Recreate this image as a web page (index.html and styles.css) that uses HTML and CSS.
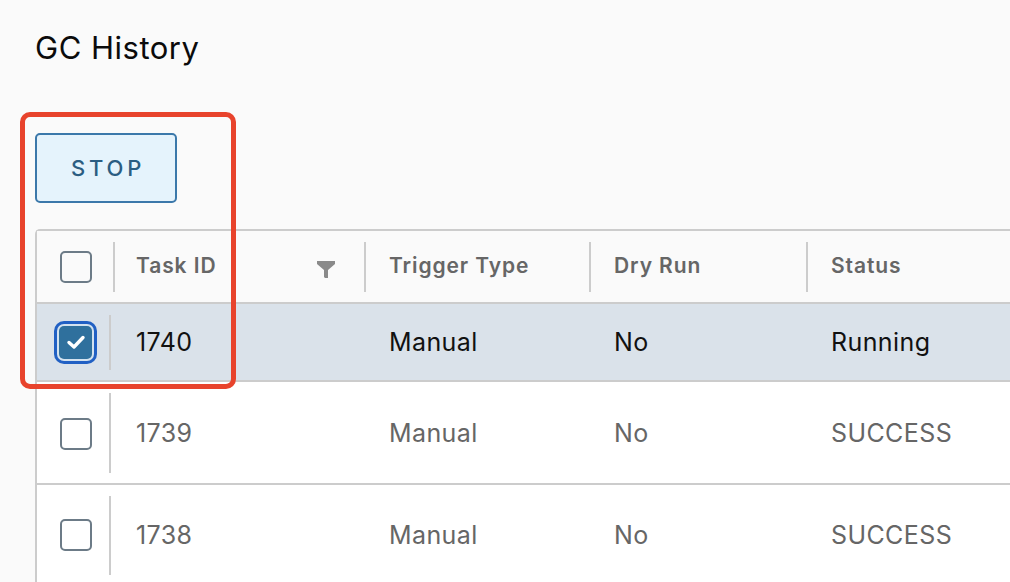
FILE: index.html
```html
<!DOCTYPE html>
<html>
<head>
<meta charset="utf-8">
<link rel="stylesheet" href="styles.css">
</head>
<body>
<div class="page">
  <h1 class="title">GC History</h1>
  <div class="toolbar">
    <button class="btn">STOP</button>
  </div>
  <div class="grid">
    <div class="row head">
      <div class="cell sel"><span class="cb"></span></div>
      <div class="cell c1"><span class="sep"></span><span class="txt">Task ID</span>
        <svg class="filter" width="18" height="17" viewBox="0 0 18 17"><path d="M0 0 H18 V3 L11 9 V17 H8 L7 16 V9 L0 3 Z" fill="#8a8a8a"/></svg>
      </div>
      <div class="cell c2"><span class="sep"></span><span class="txt">Trigger Type</span></div>
      <div class="cell c3"><span class="sep"></span><span class="txt">Dry Run</span></div>
      <div class="cell c4"><span class="sep"></span><span class="txt">Status</span></div>
    </div>
    <div class="row body selected r1">
      <div class="cell sel"><span class="cb checked"><svg width="20" height="16" viewBox="0 0 20 16"><path d="M3 8.5 L8 13 L17 3.5" fill="none" stroke="#fff" stroke-width="3.4" stroke-linecap="round" stroke-linejoin="round"/></svg></span><span class="sep"></span></div>
      <div class="cell c1"><span class="txt">1740</span></div>
      <div class="cell c2"><span class="txt">Manual</span></div>
      <div class="cell c3"><span class="txt">No</span></div>
      <div class="cell c4"><span class="txt">Running</span></div>
    </div>
    <div class="row body r2">
      <div class="cell sel"><span class="cb"></span><span class="sep"></span></div>
      <div class="cell c1"><span class="txt">1739</span></div>
      <div class="cell c2"><span class="txt">Manual</span></div>
      <div class="cell c3"><span class="txt">No</span></div>
      <div class="cell c4"><span class="txt">SUCCESS</span></div>
    </div>
    <div class="row body r3">
      <div class="cell sel"><span class="cb"></span><span class="sep"></span></div>
      <div class="cell c1"><span class="txt">1738</span></div>
      <div class="cell c2"><span class="txt">Manual</span></div>
      <div class="cell c3"><span class="txt">No</span></div>
      <div class="cell c4"><span class="txt">SUCCESS</span></div>
    </div>
  </div>
  <div class="highlight"></div>
</div>
</body>
</html>
```

FILE: styles.css
```css
* { box-sizing: border-box; }
html, body {
  margin: 0;
  padding: 0;
  background: #fafafa;
  overflow: hidden;
  width: 1010px;
  height: 582px;
}
body {
  font-family: "Inter", "Noto Sans", sans-serif;
  color: #1b1b1b;
}
.page {
  position: relative;
  padding: 0 0 0 35px;
  height: 582px;
  overflow: hidden;
}
.title {
  margin: 0;
  padding-top: 28px;
  font-size: 31px;
  font-weight: 400;
  line-height: 40px;
  color: #0b0b0b;
  letter-spacing: 0.5px;
}
.toolbar {
  padding-top: 65px;
  height: 161px;
}
.btn {
  width: 142px;
  height: 70px;
  background: #e5f3fc;
  border: 2px solid #3b78aa;
  border-radius: 5px;
  color: #2b5d82;
  font-family: "Inter", "Noto Sans", sans-serif;
  font-size: 22px;
  font-weight: 500;
  letter-spacing: 3.8px;
  padding: 0 0 0 4px;
}
.grid {
  width: 975px;
  border: 2px solid #cccccc;
  border-right: none;
  border-bottom: none;
  border-radius: 5px 0 0 0;
  background: #ffffff;
}
.row {
  display: grid;
  grid-template-columns: 76px 251px 225px 217px 300px;
  border-bottom: 2px solid #cccccc;
}
.head { height: 73px; background: #fafafa; }
.r1 { height: 78px; }
.r2 { height: 103px; }
.r3 { height: 100px; border-bottom: none; }
.selected { background: #dae2ea; }
.cell {
  display: flex;
  align-items: center;
  position: relative;
}
.sel {
  justify-content: flex-start;
  padding-left: 23px;
}
.sep {
  position: absolute;
  top: 11px;
  bottom: 10px;
  width: 2px;
  background: #cccccc;
}
.head .cell .sep { left: 0; }
.body .sel .sep { right: 2px; }
.txt { padding-left: 25px; }
.c1 .txt { padding-left: 23px; }
.head .txt {
  font-size: 21px;
  font-weight: 600;
  color: #666666;
  letter-spacing: 0.9px;
  margin-top: -2px;
}
.body .txt {
  font-size: 25px;
  color: #666666;
  letter-spacing: 0.4px;
}
.selected .txt { color: #111111; }
.filter {
  position: absolute;
  left: 204px;
  top: 30px;
}
.cb {
  display: inline-block;
  width: 32px;
  height: 32px;
  border: 2px solid #6c7b87;
  border-radius: 5px;
  background: #ffffff;
}
.head .cb { background: transparent; }
.cb.checked {
  width: 33px;
  height: 33px;
  margin-left: -1px;
  border: none;
  background: #2f709d;
  box-shadow: 0 0 0 2px #d3e2ef, 0 0 0 5px #2160c4;
  display: flex;
  align-items: center;
  justify-content: center;
}
.r2 .cb { margin-top: 2px; }
.r3 .cb { margin-top: 0; }
.highlight {
  position: absolute;
  left: 20px;
  top: 112px;
  width: 216px;
  height: 277px;
  border: 5px solid #e8432c;
  border-radius: 10px;
}
```
